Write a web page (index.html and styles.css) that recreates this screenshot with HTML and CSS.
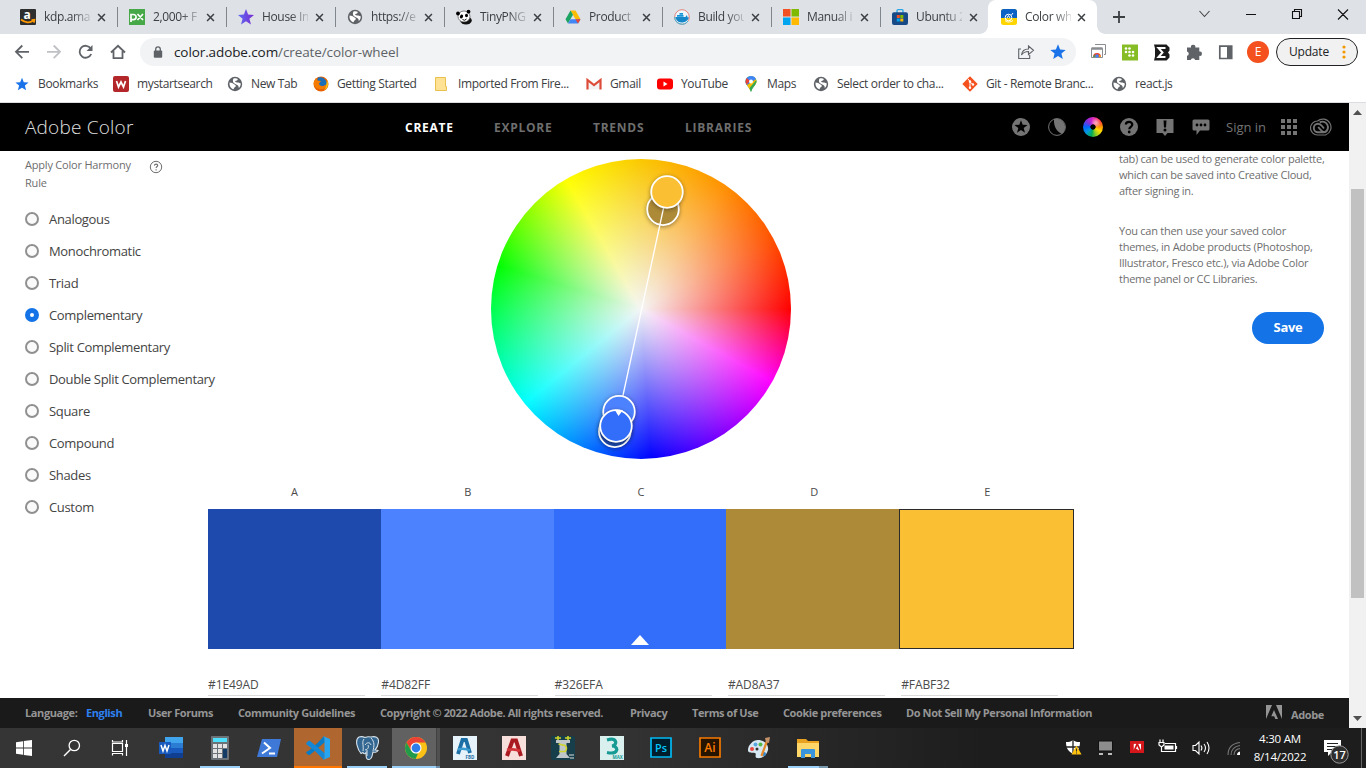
FILE: index.html
```html
<!DOCTYPE html>
<html lang="en">
<head>
<meta charset="utf-8">
<title>Color wheel, a color palette generator | Adobe Color</title>
<link rel="stylesheet" href="styles.css">
</head>
<body>
<svg class="defs" width="0" height="0">
  <symbol id="globe" viewBox="0 0 16 16"><circle cx="8" cy="8" r="7.2" fill="#5f6368"/><path d="M2.6 6.4c2 0 3.300 .8 5 2 1.500.9 1.700 1.500.8 2.300-.9.8-1.700 1-1.700 2.600C4 12.600 2 10 2.600 6.400zM6.500 2.600c1.800-.6 3.300-.3 4.300.3-.2 1.500-1.300 1.700-2.400 2.200-.7.4.3 1.600 2 1.500 1.600 0 2 .8 3.300.6.2 2-.7 3.700-2 4.900.2-1.900-.6-3-2-3.400C7.200 8 4.700 6.200 6.500 2.600z" fill="#fff"/></symbol>
  <symbol id="close" viewBox="0 0 10 10"><path d="M1.200 1.200l7.600 7.600M8.800 1.200L1.200 8.800" stroke="#3c4043" stroke-width="1.700" fill="none"/></symbol>
  <symbol id="chrome" viewBox="0 0 24 24"><circle cx="12" cy="12" r="11" fill="#fbc116"/><path d="M2.500 6.500A11 11 0 0 1 21.500 6.500H12L7.300 14.700z" fill="#ea4335"/><path d="M2.500 6.500L7.200 14.700 12 17.500h2L11.600 23A11 11 0 0 1 2.500 6.500z" fill="#229a4c"/><circle cx="12" cy="12" r="5.500" fill="#fff"/><circle cx="12" cy="12" r="4.400" fill="#2f7de9"/></symbol>
  <symbol id="adobe" viewBox="0 0 16 14"><path d="M0 0h6L0 14zM16 0h-6l6 14zM8 5l4 9H9.300L8.200 11.200H5.300z"/></symbol>
</svg>

<header class="tabs">
  <div class="tab"><svg class="fav" viewBox="0 0 16 16"><rect width="16" height="16" rx="1" fill="#2e2e2e"/><text x="3.500" y="9.500" font-size="12" font-weight="700" fill="#fff" font-family="Open Sans">a</text><path d="M1 10.500c4 3.500 9 3.500 12 1.300M11.500 11l3-.3-.6 3" stroke="#f90" stroke-width="1.700" fill="none"/></svg><span class="tt">kdp.ama</span><svg class="x"><use href="#close"/></svg></div>
  <div class="tab"><svg class="fav" viewBox="0 0 16 16"><rect width="16" height="16" fill="#46a847"/><path d="M2 13V5.500h2.500a2.300 2.300 0 0 1 0 5.200H2M8.500 5l5.500 6M14 5l-5.500 6" stroke="#fff" stroke-width="1.700" fill="none"/></svg><span class="tt">2,000+ F</span><svg class="x"><use href="#close"/></svg></div>
  <div class="tab"><svg class="fav" viewBox="0 0 16 16"><defs><linearGradient id="sg"><stop stop-color="#5b6cf5"/><stop offset="1" stop-color="#7a2bd0"/></linearGradient></defs><path d="M8 0l2.100 5.600L16 6l-4.600 3.700L13 15.500 8 12.300 3 15.500l1.600-5.800L0 6l5.900-.4z" fill="url(#sg)"/></svg><span class="tt">House In</span><svg class="x"><use href="#close"/></svg></div>
  <div class="tab"><svg class="fav"><use href="#globe"/></svg><span class="tt">https://e</span><svg class="x"><use href="#close"/></svg></div>
  <div class="tab"><svg class="fav" viewBox="0 0 16 16"><ellipse cx="10" cy="11.500" rx="5.800" ry="4" fill="#111"/><ellipse cx="8" cy="7.500" rx="6" ry="5.500" fill="#fff" stroke="#333" stroke-width=".6"/><circle cx="2" cy="4.500" r="1.900"/><circle cx="12.500" cy="2.700" r="1.900"/><ellipse cx="5.500" cy="7.500" rx="1.500" ry="2" transform="rotate(30 5.500 7.500)"/><ellipse cx="10.500" cy="6.500" rx="1.500" ry="1.800"/><path d="M6.500 10.500q2 1.800 4-.5" stroke="#111" fill="none"/></svg><span class="tt">TinyPNG</span><svg class="x"><use href="#close"/></svg></div>
  <div class="tab"><svg class="fav" viewBox="0 0 16 16"><path d="M5.500 1.500h5l5 8.700h-5z" fill="#fbbc04"/><path d="M5.500 1.500L8 5.800 3 14.500.5 10.200z" fill="#1da462"/><path d="M5.500 10.200h10L13 14.500H3z" fill="#4285f4"/><path d="M10.500 10.200h5L13 14.500z" fill="#ea4335"/></svg><span class="tt">Product</span><svg class="x"><use href="#close"/></svg></div>
  <div class="tab"><svg class="fav" viewBox="0 0 16 16"><circle cx="8" cy="8" r="7.300" fill="#eef6fb" stroke="#e5837c"/><path d="M.7 8A7.300 7.300 0 0 0 14 12" stroke="#35b6d8" fill="none"/><path d="M1.500 8h10c.3-1 .8-1.500 1.300-1.800.6.8.7 1.400.5 2l1.700.2c-.8 2.500-3 4.800-6.500 5C4 14 2 11 1.500 8z" fill="#1586c7"/><path d="M3 6h6.500v1.700H3zM5.500 4H9v1.700H5.500z" fill="#1894d8"/></svg><span class="tt">Build you</span><svg class="x"><use href="#close"/></svg></div>
  <div class="tab"><svg class="fav" viewBox="0 0 16 16"><path d="M0 0h7.500v7.500H0z" fill="#f25022"/><path d="M8.500 0H16v7.500H8.500z" fill="#7fba00"/><path d="M0 8.500h7.500V16H0z" fill="#00a4ef"/><path d="M8.500 8.500H16V16H8.500z" fill="#ffb900"/></svg><span class="tt">Manual i</span><svg class="x"><use href="#close"/></svg></div>
  <div class="tab last"><svg class="fav" viewBox="0 0 16 16"><path d="M5 4V1.500Q5 .7 6 .7h4q1 0 1 .8V4" stroke="#29a8e8" stroke-width="1.300" fill="none"/><rect y="3.200" width="16" height="12.800" rx="2" fill="#174a86"/><path d="M4.800 6h3v3h-3z" fill="#f25022"/><path d="M8.300 6h3v3h-3z" fill="#7fba00"/><path d="M4.800 9.500h3v3h-3z" fill="#00a4ef"/><path d="M8.300 9.500h3v3h-3z" fill="#ffb900"/></svg><span class="tt">Ubuntu 2</span><svg class="x"><use href="#close"/></svg></div>
  <div class="tab active"><svg class="fav" viewBox="0 0 16 16"><rect width="16" height="16" rx="2.500" fill="#ffd500"/><path d="M2.500 0h11A2.500 2.500 0 0 1 16 2.500V9H0V2.500A2.500 2.500 0 0 1 2.500 0z" fill="#0b62c4"/><circle cx="7.500" cy="8.500" r="3.300" fill="none" stroke="#fff"/><path d="M6 9l1.500-2.500L9 9M10.500 6l1.500-2M4 11.500c2 2 5 2 8 0" stroke="#fff" fill="none"/></svg><span class="tt">Color wh</span><svg class="x"><use href="#close"/></svg></div>
  <svg class="newtab" viewBox="0 0 12 12"><path d="M6 0v12M0 6h12" stroke="#3c4043" stroke-width="1.800"/></svg>
  <svg class="winctl" viewBox="0 0 160 28"><g fill="none" stroke="#111" stroke-width="1.100"><path d="M9.500 11l5 5.500 5-5.500" stroke="#444"/><path d="M56 14.500h10M102.500 11.500h7v7h-7zM104.500 11.500v-2h7v7h-2M148 9.500l10 10M158 9.500l-10 10"/></g></svg>
</header>

<div class="toolbar">
  <svg class="navicons" viewBox="0 0 126 35"><g fill="none" stroke="#5f6368" stroke-width="1.800"><path d="M29 17.800H16.500M22.300 11.500L16 17.800l6.300 6.300"/><path d="M47 17.800h12.500M53.700 11.500l6.300 6.300-6.300 6.300" stroke="#bfc1c4"/><path d="M90.700 14.500A6 6 0 1 0 91.200 20"/><path d="M111 18.500l7-6.700 7 6.700M113.500 17v7.200h9V17"/></g><path d="M92.500 11v6h-6z" fill="#5f6368"/></svg>
  <div class="omnibox">
    <svg class="lock" viewBox="0 0 10 12"><rect x=".8" y="4.500" width="8.400" height="7.200" rx="1" fill="#5f6368"/><path d="M2.700 5V3.200a2.300 2.300 0 0 1 4.600 0V5" fill="none" stroke="#5f6368" stroke-width="1.300"/></svg>
    <span class="url">color.adobe.com<i>/create/color-wheel</i></span>
    <svg class="omniright" viewBox="0 0 60 28"><path d="M5 11H2.700v9.500h11V17M5.500 17c.5-4.500 3-6 7-6V8l5 4.300-5 4.200v-3c-3 0-5 .6-7 3.500z" fill="none" stroke="#5f6368" stroke-width="1.100"/><path d="M42 6.200l2.100 5.300 5.600.4-4.300 3.600 1.400 5.500L42 18l-4.800 3 1.400-5.500-4.300-3.600 5.600-.4z" fill="#1a73e8"/></svg>
  </div>
  <svg class="ext" viewBox="0 0 192 34"><g fill="#fff" stroke="#8a8d91"><path d="M10 9.500h10.500v10H19"/><path d="M6.500 13.500h11v9h-11z"/><path d="M6.500 13.500h11" stroke-width="2.500"/></g><path d="M8 22a4 4 0 0 1 8 0z" fill="#ea4335"/><circle cx="12" cy="21" r="1.700" fill="#4285f4"/><path d="M8 22l2-3v3z" fill="#34a853"/><path d="M16 22l-1.700-3v3z" fill="#fbbc04"/>
    <path d="M37 9.500h16v16H37z" fill="#86bc25"/><g fill="#fff"><circle cx="41" cy="13.500" r="1.300"/><circle cx="44.500" cy="13.500" r="1.300"/><circle cx="41" cy="17" r="1.300"/><circle cx="44.500" cy="17" r="1.300"/><circle cx="48" cy="17" r="1.300"/><circle cx="44.500" cy="20.500" r="1.300"/><circle cx="48" cy="20.500" r="1.300"/></g>
    <path d="M69 9.500h12.500l3 3v3L83 17.500l1.500 2v3l-3 3H69l1-4v-8z" fill="#1b1b1b"/><path d="M80.500 13H73.500l4 4.500-4 4.500h7" stroke="#fff" stroke-width="2" fill="none"/>
    <path d="M102 12.500h4a2.200 2.200 0 1 1 4.300 0h4v4a2.200 2.200 0 1 1 0 4.300v4.200h-4.200a2.200 2.200 0 0 0-4.300 0H102v-4.200a2.200 2.200 0 0 0 0-4.300z" fill="#5f6368"/>
    <path d="M134.800 11.200h11.900v12.300h-11.900z" fill="#fff" stroke="#5f6368" stroke-width="1.700"/><path d="M142 11h5v13h-5z" fill="#5f6368"/>
    <circle cx="173" cy="17" r="11" fill="#f4511e"/><text x="173" y="21.300" font-size="12" text-anchor="middle" fill="#fff" font-family="Open Sans">E</text></svg>
  <div class="update"><span>Update</span><svg width="4" height="14"><g fill="#f29900"><circle cx="2" cy="2" r="1.600"/><circle cx="2" cy="7" r="1.600"/><circle cx="2" cy="12" r="1.600"/></g></svg></div>
</div>

<nav class="bookmarks">
  <div><svg viewBox="0 0 16 16"><path d="M8 1.800l1.800 4.400 4.800.3-3.700 3.100L12.100 14.300 8 11.700l-4.100 2.600 1.200-4.700L1.400 6.500l4.800-.3z" fill="#1a73e8"/></svg><span>Bookmarks</span></div>
  <div><svg viewBox="0 0 16 16"><rect width="16" height="16" rx="2" fill="#b3262a"/><path d="M3.500 5l2 6L8 6l2.500 5 2-6" stroke="#fff" stroke-width="1.700" fill="none"/></svg><span>mystartsearch</span></div>
  <div><svg><use href="#globe"/></svg><span>New Tab</span></div>
  <div><svg viewBox="0 0 16 16"><circle cx="8" cy="8" r="7.500" fill="#e66000"/><path d="M5 1.500A7 7 0 0 1 14 7c-1 4-6 5-8 2L4 5z" fill="#1d6fb8"/><path d="M1 5l2-3 1.500 2.500L8 5 6 7.500c0 3 4 3.500 8 .5-1 5-5 6-8 5C2 12 0 9 1 5z" fill="#f57c00"/><path d="M14 4c2 4 1 8-3 10.500 2-3 2.500-6 3-10.500z" fill="#ffc20e"/></svg><span>Getting Started</span></div>
  <div><svg viewBox="0 0 16 16"><path d="M1.500 1.500h10v9h1v4h-11z" fill="#ffe294" stroke="#e8c04e"/></svg><span>Imported From Fire...</span></div>
  <div><svg viewBox="0 0 16 16"><path d="M1.500 13.500V4L8 9l6.500-5v9.500" stroke="#dd4b39" stroke-width="2.200" fill="#f3f3f3"/></svg><span>Gmail</span></div>
  <div><svg viewBox="0 0 16 16"><rect y="2.500" width="16" height="11" rx="3" fill="#f00"/><path d="M6.500 5.500v5L10.500 8z" fill="#fff"/></svg><span>YouTube</span></div>
  <div><svg viewBox="0 0 16 16"><path d="M8 0a5.500 5.500 0 0 1 5.500 5.500C13.500 9 9.500 11 8 16 6.500 11 2.500 9 2.500 5.500A5.500 5.500 0 0 1 8 0z" fill="#34a853"/><path d="M8 0a5.500 5.500 0 0 1 5 3.300L4 9Q2.500 7.500 2.500 5.500A5.500 5.500 0 0 1 8 0z" fill="#4285f4"/><path d="M3.800 2L7 5 3.500 8.700Q1.500 5 3.800 2z" fill="#ea4335"/><path d="M13 3.300q1 2.200-.5 4.700L7 14 4 9z" fill="#fbbc04"/><path d="M13.300 4q.8 2.500-1.300 4.800C10 11 9 12.500 8 16L6.500 12z" fill="#34a853"/><circle cx="8" cy="5.500" r="2" fill="#fff"/></svg><span>Maps</span></div>
  <div><svg><use href="#globe"/></svg><span>Select order to cha...</span></div>
  <div><svg viewBox="0 0 16 16"><path d="M8 .3L15.700 8 8 15.700.3 8z" fill="#f4511e"/><path d="M6 3l2 2.500v6.500M8 6l3 2.500" stroke="#fff" fill="none"/><circle cx="8" cy="5.500" r="1.200" fill="#fff"/><circle cx="8" cy="11.700" r="1.200" fill="#fff"/><circle cx="11" cy="8.500" r="1.200" fill="#fff"/></svg><span>Git - Remote Branc...</span></div>
  <div><svg><use href="#globe"/></svg><span>react.js</span></div>
</nav>

<div class="viewport">
<div class="page">
  <header class="site">
    <span class="brand">Adobe Color</span>
    <nav class="menu"><b class="on">CREATE</b><b>EXPLORE</b><b>TRENDS</b><b>LIBRARIES</b></nav>
    <div class="tools">
      <svg viewBox="0 0 18 18"><circle cx="9" cy="9" r="9" fill="#747474"/><path d="M9 2.300l1.700 4.500 4.900.2-3.900 3.100 1.300 4.700L9 12.100l-4 2.700 1.300-4.700L2.400 7l4.900-.2z"/></svg>
      <svg viewBox="0 0 18 18"><circle cx="9" cy="9" r="8.400" fill="none" stroke="#747474"/><path d="M6 1C5.500 8 8.500 13.500 14 16A8.700 8.700 0 0 0 6 1z" fill="#747474"/></svg>
      <div class="disc"></div>
      <svg viewBox="0 0 18 18"><circle cx="9" cy="9" r="9" fill="#747474"/><path d="M5.800 6.500C6 3 12.300 3 12.300 6.500c0 2.200-3 2.500-3 4.700" fill="none" stroke="#000" stroke-width="2.200"/><circle cx="9.200" cy="14" r="1.400"/></svg>
      <svg viewBox="0 0 18 18"><path d="M.5 1h17v14h-6L9 18l-2.500-3h-6z" fill="#747474"/><path d="M7.500 2.500h3L10 9.500H8z"/><circle cx="9" cy="12" r="1.500"/></svg>
      <svg viewBox="0 0 18 18"><path d="M.5 3q0-1.500 1.500-1.500h14q1.500 0 1.500 1.500v8q0 1.500-1.500 1.500H8L4.500 17v-4.500H2q-1.500 0-1.500-1.500z" fill="#747474"/><circle cx="5" cy="7" r="1.400"/><circle cx="9" cy="7" r="1.400"/><circle cx="13" cy="7" r="1.400"/></svg>
    </div>
    <span class="signin">Sign in</span>
    <svg class="apps" viewBox="0 0 16 16"><path d="M0 0h4v4H0zM6 0h4v4H6zM12 0h4v4h-4zM0 6h4v4H0zM6 6h4v4H6zM12 6h4v4h-4zM0 12h4v4H0zM6 12h4v4H6zM12 12h4v4h-4z" fill="#747474"/></svg>
    <svg class="cc" viewBox="0 0 24 18"><g fill="none" stroke="#747474"><path d="M7.500 17A7 7 0 0 1 7.500 3 8.200 8.200 0 1 1 15.500 17z" stroke-width="1.200"/><path d="M14 14.200H8a4.200 4.200 0 0 1 0-8.400c2 0 3 1 4 2.200L14 10.500M9.700 4.300a5.500 5.500 0 1 1 5.300 9.900c-2.500 0-3.500-1.200-4.700-2.700L8.200 9" stroke-width="1.900"/></g></svg>
  </header>

  <main class="work">
    <aside class="rules">
      <div class="ruletitle"><span>Apply Color Harmony<br>Rule</span><svg viewBox="0 0 14 14"><circle cx="7" cy="7" r="5.700" fill="none" stroke="#6e6e6e"/><path d="M5.400 5.600c.2-2 3.400-1.900 3.300 0-.1 1-1.600 1-1.600 2.400M7.100 9.300v1.200" fill="none" stroke="#6e6e6e" stroke-width="1.100"/></svg></div>
      <label><i></i>Analogous</label>
      <label><i></i>Monochromatic</label>
      <label><i></i>Triad</label>
      <label><i class="sel"></i>Complementary</label>
      <label><i></i>Split Complementary</label>
      <label><i></i>Double Split Complementary</label>
      <label><i></i>Square</label>
      <label><i></i>Compound</label>
      <label><i></i>Shades</label>
      <label><i></i>Custom</label>
    </aside>

    <section class="center">
      <div class="wheel">
        <svg class="handles" viewBox="0 0 300 300">
          <g class="handle">
            <circle cx="172" cy="50.300" r="15.800" fill="#ad8a37"/>
          </g>
          <path d="M176 33L124.500 271" stroke="#fff" stroke-width="1.300"/>
          <g class="handle">
            <circle cx="128" cy="252.700" r="15.800" fill="#4d82ff"/>
            <circle cx="123.800" cy="272.300" r="15.800" fill="#1e49ad"/>
            <circle cx="125" cy="267" r="15.800" fill="#326efa"/>
            <circle cx="176" cy="33" r="15.800" fill="#fabf32"/>
          </g>
          <path d="M123.500 250.500l8.500.5-4.500 6z" fill="#fff"/>
        </svg>
      </div>
      <div class="letters"><span>A</span><span>B</span><span>C</span><span>D</span><span>E</span></div>
      <div class="swatches"><div class="a"></div><div class="b"></div><div class="c"><svg width="18" height="10"><path d="M9 0l9 10H0z" fill="#fff"/></svg></div><div class="d"></div><div class="e"></div></div>
      <div class="hex"><span>#1E49AD</span><span>#4D82FF</span><span>#326EFA</span><span>#AD8A37</span><span>#FABF32</span></div>
    </section>

    <aside class="info">
      <p>tab) can be used to generate color palette,<br>which can be saved into Creative Cloud,<br>after signing in.</p>
      <p>You can then use your saved color<br>themes, in Adobe products (Photoshop,<br>Illustrator, Fresco etc.), via Adobe Color<br>theme panel or CC Libraries.</p>
      <button>Save</button>
    </aside>
  </main>

  <footer class="foot">
    <span>Language:</span><span class="en">English</span><span>User Forums</span><span>Community Guidelines</span><span>Copyright © 2022 Adobe. All rights reserved.</span><span>Privacy</span><span>Terms of Use</span><span>Cookie preferences</span><span>Do Not Sell My Personal Information</span>
    <svg><use href="#adobe"/></svg><span class="ad">Adobe</span>
  </footer>
</div>
<div class="scroll"><svg width="9" height="5"><path d="M0 5l4.500-5L9 5z" fill="#505050"/></svg><div class="thumb"></div><svg class="down" width="9" height="5"><path d="M0 0h9L4.500 5z" fill="#505050"/></svg></div>
</div>

<div class="taskbar">
  <div class="sys">
    <svg viewBox="0 0 24 24"><path d="M4 6.200l7-1v6.300H4zM11.800 5L20 4v7.500h-8.200zM4 12.500h7v6.300l-7-1zM11.800 12.500H20V20l-8.200-1.100z" fill="#fff"/></svg>
    <svg viewBox="0 0 24 24"><circle cx="14.300" cy="9.500" r="5.200" fill="none" stroke="#fff" stroke-width="1.300"/><path d="M10.500 13.500L4 20" stroke="#fff" stroke-width="1.400"/></svg>
    <svg viewBox="0 0 24 24"><g fill="none" stroke="#fff" stroke-width="1.200"><path d="M4.500 7.500h10v8h-10zM4.500 4v2h10V4M4.500 19.500v-2h10v2M18.500 4v16"/></g><path d="M17 8h3v3h-3z" fill="#fff"/></svg>
  </div>
  <div class="apps-row">
    <div class="app"><svg viewBox="0 0 24 24"><path d="M6 1h18v6H6z" fill="#41a5ee"/><path d="M6 7h18v5H6z" fill="#2b7cd3"/><path d="M6 12h18v5H6z" fill="#185abd"/><path d="M6 17h18v5H6z" fill="#103f91"/><path d="M0 6h12v12H0z" fill="#185abd"/><path d="M2 9l2 6 2-5.500L8 15l2-6" fill="none" stroke="#fff" stroke-width="1.500"/></svg></div>
    <div class="app"><svg viewBox="0 0 24 24"><rect x="3" width="18" height="24" rx="1" fill="#6c7378"/><path d="M5 2h14v4H5z" fill="#4fe0fb"/><g fill="#e3e3e3"><path d="M5 8h4v4H5zM10 8h4v4h-4zM15 8h4v4h-4zM5 13h4v4H5zM10 13h4v4h-4zM5 18h4v4H5zM10 18h4v4h-4z"/></g><path d="M15 13h4v9h-4z" fill="#123b66"/></svg><s class="wide"></s></div>
    <div class="app"><svg viewBox="0 0 24 24"><path d="M5 3h19l-4 18H0z" fill="#3f79d8"/><path d="M7 6.500l6 5.500-8 5.500M12 17.500h6" stroke="#fff" stroke-width="2" fill="none"/></svg></div>
    <div class="app vs"><svg viewBox="0 0 24 24"><path d="M18 0l-6.500 7L3 14.500 0 16l1 2 2.500 1.200L19 6z" fill="#0a7bc4"/><path d="M1 6l2.500-1.500L19 17.500 18 24 9 15 0 8z" fill="#1587d4"/><path d="M17 0l7 3v18l-7 3c1-1 1.500-1.500 1.500-3V3c0-1.500-.5-2-1.500-3z" fill="#28a5f1"/></svg><s class="full"></s></div>
    <div class="app"><svg viewBox="0 0 24 24"><path d="M4 1c3-1 5 0 6 .5C12 .5 14 .5 16 1c4-1 8 0 7.500 5C23 10 21 13 20 14l3 .5c-1 2-4 2-5 1.500-1 3-.5 7-4 7.500-3 .3-3-3-3-7-1 1.500-2 2-3 0l-2 1C3 14-1 4 4 1z" fill="#336791" stroke="#d8e2ea" stroke-width="1.100"/><path d="M9 3C6.500 6 9 10 8 15M16 2c4 4 3 8 2 13M10 9c2-3 5-3 6 0M12 14v6M10 14c3-1 4-2 3-5" fill="none" stroke="#d8e2ea"/></svg><s class="wide"></s></div>
    <div class="app ch"><svg><use href="#chrome"/></svg><s class="full2"></s></div>
    <div class="app"><svg viewBox="0 0 24 24"><path d="M0 0h24v24H0z" fill="#e7f3fa"/><path d="M5 18l4.500-14h3.500l4 13" fill="none" stroke="#1b6fa5" stroke-width="3.800"/><path d="M5 13.500c4-1 8-1 12 1" stroke="#3a9bd0" stroke-width="2.500" fill="none"/><text x="12.500" y="22.700" font-size="4.500" font-weight="700" fill="#1b6fa5" font-family="Open Sans">FBD</text></svg></div>
    <div class="app"><svg viewBox="0 0 24 24"><path d="M0 0h24v24H0z" fill="#f7dfdb"/><path d="M5 20l5.500-15.500H14l5 15.500" fill="none" stroke="#a91920" stroke-width="4"/><path d="M5 14c4-1 9-1 13 1" stroke="#d3353a" stroke-width="2.700" fill="none"/></svg></div>
    <div class="app"><svg viewBox="0 0 24 24"><rect width="24" height="24" rx="2" fill="#173e4b"/><path d="M5 4h14v3h-3.500v11l3.500 4H5l3.500-4V7H5z" fill="#bfc7ca"/><path d="M4 2h6M14 2h6M7 0v4M17 0v4M7.500 8l6.500 1.500q3 2.500 0 6L8 15.500" stroke="#cfd52b" stroke-width="1.600" fill="none"/><path d="M18 19h5M19 22h4" stroke="#ddd"/></svg></div>
    <div class="app"><svg viewBox="0 0 24 24"><path d="M0 0h24v24H0z" fill="#d9f0ee"/><path d="M7 4c10-3 11 5 5 6 7 0 7 9-5 6.500" fill="none" stroke="#159a94" stroke-width="3.200"/><text x="12.500" y="22.700" font-size="4.500" font-weight="700" fill="#159a94" font-family="Open Sans">MAX</text></svg></div>
    <div class="app"><svg viewBox="0 0 24 24"><path d="M2 2h20v19H2z" fill="#001d2b" stroke="#00b9f2" stroke-width="1.700"/><text x="12" y="16" font-size="11" font-weight="600" text-anchor="middle" textLength="12" lengthAdjust="spacingAndGlyphs" fill="#00c8ff" font-family="Open Sans">Ps</text></svg></div>
    <div class="app"><svg viewBox="0 0 24 24"><path d="M2 2h20v19H2z" fill="#261300" stroke="#f37800" stroke-width="1.700"/><text x="12" y="16" font-size="12" font-weight="600" text-anchor="middle" fill="#ff7c00" font-family="Open Sans">Ai</text></svg></div>
    <div class="app"><svg viewBox="0 0 24 24"><path d="M11 4c6 0 11 4 10 10-1 5-6 9-11 8-3-1 0-4-2-5s-7 1-7-3c0-5 5-10 10-10z" fill="#d8e8f2"/><circle cx="5" cy="13" r="2" fill="#e9473f"/><circle cx="8.500" cy="8.500" r="2" fill="#58a8e0"/><circle cx="13.500" cy="8.500" r="2" fill="#55b847"/><circle cx="10" cy="13" r="1.500" fill="#333"/><circle cx="17" cy="18" r="2" fill="#3285cc"/><path d="M14.500 20L20 5" stroke="#e48a2a" stroke-width="2.200"/><path d="M19 6l-1-4 5-1-1 6z" fill="#c49269"/></svg></div>
    <div class="app"><svg viewBox="0 0 24 24"><path d="M1 3h9l2 2h11v16H1z" fill="#e9a220"/><path d="M1 7h22v14H1z" fill="#ffd768"/><path d="M5 14q0-1 1-1h12q1 0 1 1v8h-4v-4H9v4H5z" fill="#3b95dd"/></svg><s class="ex"></s></div>
  </div>
  <svg class="tray" viewBox="0 0 192 40">
    <path d="M16 12c2 1.700 4 2 7 2 0 6-2 9-7 12-5-3-7-6-7-12 3 0 5-.3 7-2z" fill="#fff"/><path d="M16 12v13M9 19h14" stroke="#222" stroke-width="1.300"/><path d="M19.500 17.500l5 9h-10z" fill="#ffc20e"/><path d="M19.500 20.500v3M19.500 24.500v1" stroke="#333"/>
    <path d="M41.500 13h14v10h-14z" fill="#8d8d8d" stroke="#111"/><path d="M42 25h4v2h-4zM51 25h4v2h-4z" fill="#bbb"/>
    <path d="M73 13h14v12H73z" fill="#d5171b"/><use href="#adobe" x="76.500" y="15.500" width="7.500" height="7" fill="#fff"/>
    <g fill="none" stroke="#fff" stroke-width="1.200"><path d="M108 15.500h10.500v8H104.500v-4M119.500 18v3M102 14.500h5v2.500l-2.500 2-2.500-2zM103 14.500v-3M106 14.500v-3"/></g><path d="M107.500 17.500h9v4h-9z" fill="#fff"/>
    <g fill="none" stroke="#fff" stroke-width="1.100"><path d="M136 17.500h2.500L142 14v12l-3.500-3.500H136zM144 17.500q1.800 2.500 0 5M147 16q3 4 0 8M150 14q4 6 0 12"/></g>
    <g fill="none" stroke="#777" stroke-width="1.100"><path d="M171 27q0-11 12-12.500M174 27q0-8 9-9.500M177 27q0-5.500 6-6.500"/></g><path d="M180 27q0-3 3-3.500V27z" fill="#fff"/>
  </svg>
  <div class="clock">4:30 AM<br>8/14/2022</div>
  <svg class="notif" viewBox="0 0 36 40"><path d="M4 12h17v12h-9l-4 4v-4H4z" fill="#fff"/><path d="M7 15.500h11M7 18.500h11M7 21.500h8" stroke="#222"/><circle cx="19.500" cy="26.500" r="8.700" fill="#2e2e2e" stroke="#999"/><text x="19.500" y="30.500" font-size="11" text-anchor="middle" fill="#fff" font-family="Open Sans" font-weight="600">17</text></svg>
</div>
</body>
</html>
```
FILE: styles.css
```css
* { box-sizing: border-box; }
body { margin: 0; width: 1366px; height: 768px; overflow: hidden; background: #fff; font-family: "Open Sans", "Noto Sans", sans-serif; font-size: 12px; color: #3c4043; white-space: nowrap; }
svg { display: block; flex: none; }
.defs { position: absolute; }

.tabs { display: flex; height: 34px; background: #dee1e6; padding-left: 9px; }
.tab { display: flex; align-items: center; width: 109px; height: 34px; padding-left: 11px; }
.tab::after { content: ""; width: 1px; height: 20px; background: #80868b; margin-left: 11px; }
.tab.last::after { display: none; }
.tab.active { position: relative; background: #fff; margin: 0 0 0 -2px; padding-left: 13px; border-radius: 8px 8px 0 0; }
.tab.active::before, .tab.active::after { content: ""; position: absolute; bottom: 0; left: -8px; width: 8px; height: 8px; margin: 0; background: radial-gradient(circle at 0 0, #dee1e6 7.500px, #fff 8px); }
.tab.active::after { left: auto; right: -8px; background: radial-gradient(circle at 100% 0, #dee1e6 7.500px, #fff 8px); }
.tab.active .x { margin-left: 6px; }
.fav { width: 16px; height: 16px; overflow: visible; }
.tt { width: 46px; margin-left: 8px; font-size: 12px; line-height: 20px; letter-spacing: -.35px; -webkit-mask-image: linear-gradient(90deg, #000 28px, transparent 50px); mask-image: linear-gradient(90deg, #000 28px, transparent 50px); }
.x { width: 9px; height: 9px; margin-left: 7px; }
.newtab { width: 12px; height: 12px; margin: 11px 0 0 16px; }
.winctl { width: 160px; height: 28px; margin-left: auto; margin-right: 16px; }

.toolbar { display: flex; align-items: center; height: 35px; }
.navicons { width: 126px; height: 35px; }
.omnibox { display: flex; align-items: center; width: 936px; height: 28px; margin-left: 14px; border-radius: 14px; background: #f1f3f4; padding-left: 13px; }
.lock { width: 10px; height: 12px; }
.url { margin-left: 11px; font-size: 13.500px; line-height: 20px; letter-spacing: -.1px; color: #202124; }
.url i { font-style: normal; color: #5f6368; }
.omniright { width: 60px; height: 28px; margin-left: auto; }
.ext { width: 192px; height: 34px; margin-left: 9px; }
.update { display: flex; align-items: center; justify-content: space-between; width: 82px; height: 28px; margin-left: -1px; padding: 0 11px 0 12px; border: 1px solid #202124; border-radius: 14px; background: #f1f1f1; font-size: 12px; letter-spacing: -.2px; color: #202124; }

.bookmarks { display: grid; grid-template-columns: 99px 114px 86px 121px 152px 71px 86px 70px 149px 149px 100px; height: 34px; padding: 0 0 4px 14px; border-bottom: 1px solid #dadce0; letter-spacing: -.35px; }
.bookmarks div { display: flex; align-items: center; gap: 8px; }
.bookmarks svg { width: 16px; height: 16px; }

.viewport { display: flex; height: 625px; }
.page { width: 1349px; display: flex; flex-direction: column; }
.site { display: flex; align-items: center; height: 48px; background: #000; padding-left: 25px; color: #747474; }
.brand { width: 380px; font-size: 19px; font-weight: 300; color: #e0e0e0; letter-spacing: .2px; }
.menu { display: grid; grid-template-columns: 89px 99px 92px 80px; width: 607px; font-size: 12px; letter-spacing: .75px; color: #6e6e6e; }
.menu .on { color: #fff; }
.tools { display: flex; align-items: center; gap: 18px; width: 214px; height: 24px; }
.tools svg { width: 18px; height: 18px; }
.disc { width: 20px; height: 20px; margin: 0 -1px; border-radius: 50%; background: radial-gradient(circle, #000 0 2.300px, transparent 3px), radial-gradient(circle at 65% 30%, #fff8 0 1px, transparent 5px), conic-gradient(#e02fc0, #f33 50deg, #f90 90deg, #fd0 120deg, #8c2 160deg, #0a5 190deg, #09d 230deg, #06f 270deg, #73d 310deg, #c2c 350deg, #e02fc0); }
.signin { width: 55px; font-size: 13px; }
.apps { width: 16px; height: 16px; }
.cc { width: 24px; height: 18px; margin-left: 13px; }

.work { display: flex; height: 547px; overflow: hidden; color: #4b4b4b; }
.rules { width: 208px; padding: 5px 0 0 25px; }
.ruletitle { display: flex; gap: 17px; height: 47px; font-size: 11px; line-height: 18px; letter-spacing: -.2px; color: #6e6e6e; }
.ruletitle span { width: 107px; }
.ruletitle svg { width: 14px; height: 14px; margin-top: 4px; }
.rules label { display: flex; align-items: center; height: 32px; font-size: 13px; line-height: 18px; letter-spacing: -.33px; color: #444; }
.rules i { width: 14px; height: 14px; margin-right: 10px; border: 2px solid #909090; border-radius: 50%; background: #fafafa; flex: none; }
.rules i.sel { border: 5px solid #1473e6; background: #fff; }
.center { width: 866px; padding-top: 8px; }
.wheel { width: 300px; height: 300px; margin-left: 283px; border-radius: 50%; background: radial-gradient(circle, #f5f5f5 0, #f5f5f500 150px), conic-gradient(#fac800, #ff9000 34deg, #ff5000 62deg, #f00 90deg, #f0f 119deg, #00f 176deg, #0ff 231deg, #0f0 287deg, #ff0 330deg, #fac800); }
.handles { width: 300px; height: 300px; overflow: visible; }
.handle circle { stroke: #fff; stroke-width: 1.800px; filter: drop-shadow(0 1px 2px #0006); }
.letters { display: grid; grid-template-columns: repeat(5, 173.200px); margin-top: 24px; height: 17px; line-height: 17px; font-size: 11px; text-align: center; }
.swatches { display: grid; grid-template-columns: 173px 173px 172px 173px 175px; height: 140px; margin-top: 9px; }
.swatches .a { background: #1e49ad; }
.swatches .b { background: #4d82ff; }
.swatches .c { background: #326efa; display: flex; align-items: flex-end; padding: 0 0 4px 77px; }
.swatches .d { background: #ad8a37; }
.swatches .e { background: #fabf32; border: 1px solid #2b2b2b; }
.hex { display: grid; grid-template-columns: repeat(5, 157px); column-gap: 16.300px; margin-top: 25px; }
.hex span { height: 22px; line-height: 22px; font-size: 12px; letter-spacing: -.1px; border-bottom: 1px solid #dadada; }
.info { width: 275px; padding-left: 45px; font-size: 11px; line-height: 16px; letter-spacing: -.26px; color: #6e6e6e; }
.info p { margin: 0 0 24px; }
.info button { display: block; width: 72px; height: 32px; margin: 25px 0 0 133px; padding: 0 0 2px; border: 0; border-radius: 16px; background: #1473e6; color: #fff; font: 700 13px "Open Sans", sans-serif; letter-spacing: -.3px; }

.foot { display: grid; grid-template-columns: 61px 62px 90px 142px 250px 62px 91px 123px 360px 25px 50px; align-items: center; height: 30px; padding-left: 25px; background: #1a1a1a; color: #959595; font-size: 11px; line-height: 14px; font-weight: 700; letter-spacing: -.4px; }
.foot .en { color: #2e80f0; }
.foot svg { width: 16px; height: 14px; fill: #959595; margin-top: -2px; }
.foot .ad { margin-top: 3px; }
.scroll { display: flex; flex-direction: column; align-items: center; width: 17px; background: #f1f1f1; padding: 7px 0; }
.thumb { width: 13px; height: 409px; margin: 74px 0 auto; background: #c1c1c1; }

.taskbar { display: flex; height: 40px; background: linear-gradient(90deg, #353535 0, #333 45%, #1d1d1d 72%); color: #fff; }
.sys { display: flex; width: 147px; padding: 8px 0 0 12px; gap: 24px; }
.sys svg, .app svg { width: 24px; height: 24px; }
.apps-row { display: flex; gap: 1px; width: 914px; }
.app { display: flex; flex-direction: column; align-items: center; width: 48px; height: 40px; padding-top: 8px; }
.app s { width: 40px; height: 2px; margin-top: 6px; background: #9bd0f8; }
.vs { background: #b0672f; }
.app s.full { width: 48px; background: #ff7600; }
.ch { background: linear-gradient(90deg, #616161 44px, #333 44px, #505050 45px); }
.app s.full2 { width: 48px; background: linear-gradient(90deg, #9bd0f8 44px, #6d8fa9 44px); }
.app s.ex { background: linear-gradient(90deg, #9bd0f8 31px, #7898ad 31px); }
.tray { width: 192px; height: 40px; margin-left: -4px; }
.clock { width: 64px; margin-left: -1px; padding-top: 2px; font-size: 11.500px; line-height: 18px; letter-spacing: -.2px; text-align: center; }
.notif { width: 36px; height: 40px; margin-left: 8px; }
.taskbar::after { content: ""; width: 1px; margin-left: 5px; background: #666; }
```
